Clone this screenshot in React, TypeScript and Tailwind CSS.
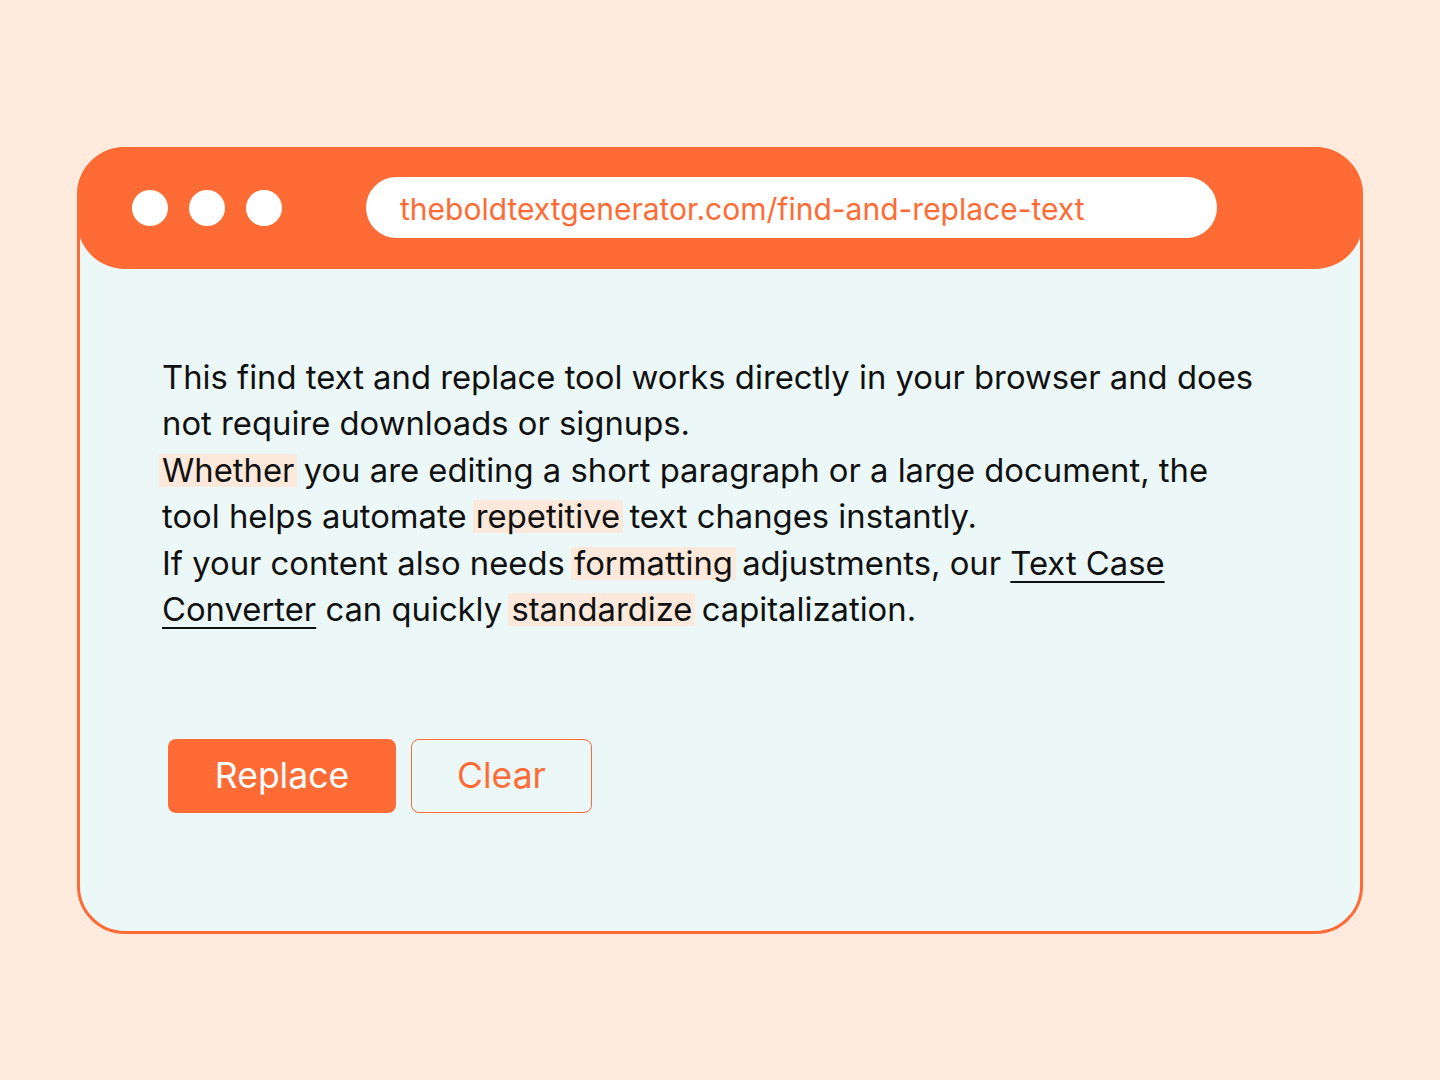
export default function App() {
  const hl = "inline-block leading-[33px] bg-[#fde9dc] px-[3px] -mx-[3px]";
  return (
    <div
      className="min-h-screen w-full bg-[#feebdd] flex items-center justify-center"
      style={{ fontFamily: "Inter, 'Noto Sans', sans-serif" }}
    >
      <div className="w-[1286px] h-[787px] rounded-[48px] border-[3px] border-[#ff6b35] bg-[#ecf8f8] flex flex-col">
        {/* browser bar */}
        <div className="-mx-[3px] -mt-[3px] h-[122px] rounded-[48px] bg-[#ff6b35] flex items-center pl-[55px]">
          <div className="flex gap-[21px]">
            <span className="size-[36px] rounded-full bg-white" />
            <span className="size-[36px] rounded-full bg-white" />
            <span className="size-[36px] rounded-full bg-white" />
          </div>
          <div className="ml-[84px] w-[851px] h-[61px] rounded-full bg-white flex items-center pl-[34px] pt-[4px] text-[#ff6b35] text-[30px]">
            theboldtextgenerator.com/find-and-replace-text
          </div>
        </div>

        <div className="flex-1 px-[82px] pt-[85px]">
          <p className="max-w-[1100px] text-[32.8px] leading-[46.5px] text-[#111]">
            This find text and replace tool works directly in your browser and does not require downloads or signups.
            <br />
            <span className={hl}>Whether</span> you are editing a short paragraph or a large document, the tool helps
            automate <span className={hl}>repetitive</span> text changes instantly.
            <br />
            If your content also needs <span className={hl}>formatting</span> adjustments, our{" "}
            <a className="underline decoration-2 underline-offset-[6px] cursor-pointer">Text Case Converter</a> can
            quickly <span className={hl}>standardize</span> capitalization.
          </p>

          <div className="mt-[106px] ml-[6px] flex gap-[15px]">
            <button className="w-[228px] h-[74px] rounded-[8px] bg-[#ff6b35] text-white text-[35.5px]">Replace</button>
            <button className="w-[181px] h-[74px] rounded-[8px] border border-[#ff6b35] text-[#ff6b35] text-[35.5px]">
              Clear
            </button>
          </div>
        </div>
      </div>
    </div>
  );
}
